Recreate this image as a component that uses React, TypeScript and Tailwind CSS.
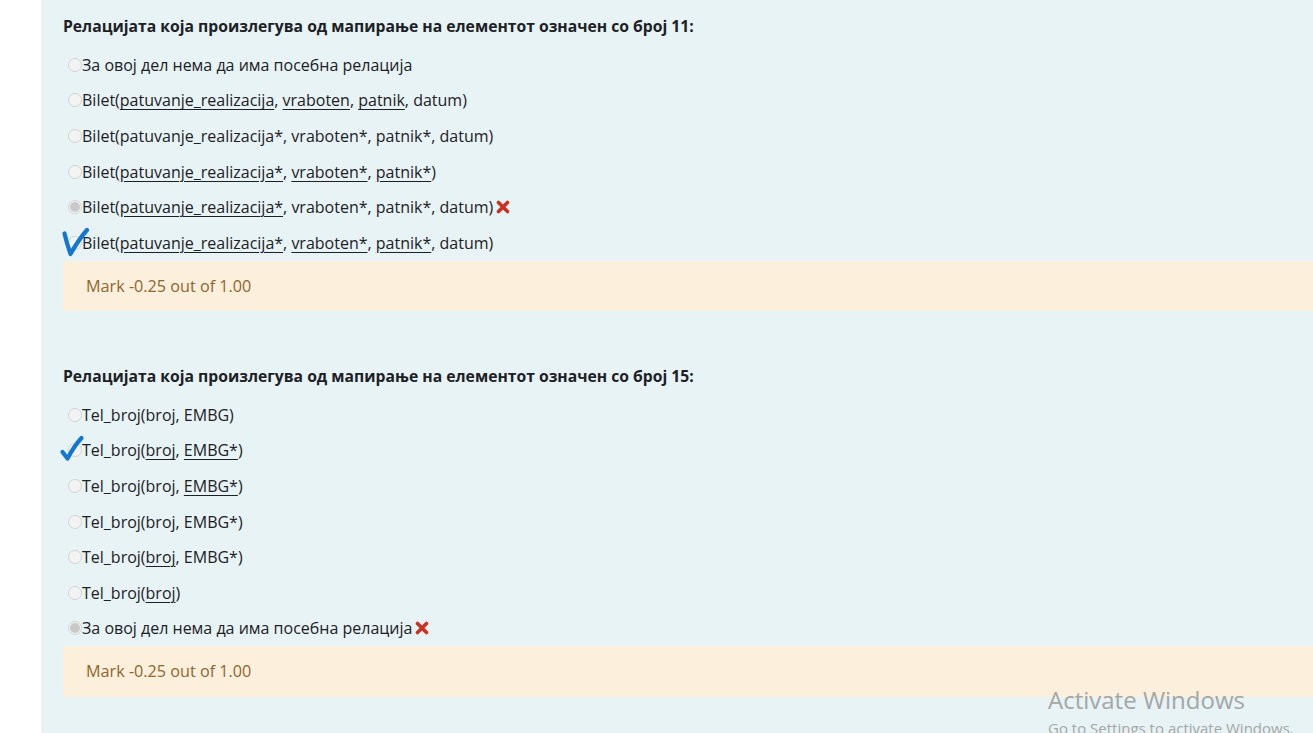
import React from "react";

type Part = { t: string; u?: boolean };

const U = (t: string): Part => ({ t, u: true });
const T = (t: string): Part => ({ t });

type Opt = { parts: Part[]; checked?: boolean; wrong?: boolean; mark?: "v" | "check" };

function Radio({ checked }: { checked?: boolean }) {
  return (
    <span className="inline-flex items-center justify-center w-[14px] h-[14px] rounded-full border border-[#d3d3d3] bg-[#f3f3f3] ml-[5px] shrink-0">
      {checked && <span className="w-[10px] h-[10px] rounded-full bg-[#c9c9c9]" />}
    </span>
  );
}

function WrongX() {
  return (
    <svg width="14" height="14" viewBox="0 0 14 14" className="ml-[3px]">
      <path d="M2.5 2.5 L11.5 11.5 M11.5 2.5 L2.5 11.5" stroke="#ca3120" strokeWidth="3.6" strokeLinecap="round" />
    </svg>
  );
}

function BigV() {
  return (
    <svg width="32" height="34" viewBox="0 0 32 34" className="absolute left-[-2px] top-[0px]">
      <path d="M3.5 8.5 C5 15 7 22 9.5 29 C14 21 19 13 26 5" stroke="#1376d0" strokeWidth="4.2" fill="none" strokeLinecap="round" strokeLinejoin="round" />
    </svg>
  );
}

function Check() {
  return (
    <svg width="28" height="32" viewBox="0 0 28 32" className="absolute left-[-4px] top-[0px]">
      <path d="M3.5 19 L8.5 25.5 C12 19 16 12 22.5 5" stroke="#1376d0" strokeWidth="4.2" fill="none" strokeLinecap="round" strokeLinejoin="round" />
    </svg>
  );
}

function Option({ o }: { o: Opt }) {
  return (
    <div className="h-[35.6px] flex items-center relative">
      <Radio checked={o.checked} />
      {o.mark === "v" && <BigV />}
      {o.mark === "check" && <Check />}
      <span className="text-[16px] text-[#1d2125] whitespace-pre">
        {o.parts.map((p, i) =>
          p.u ? (
            <span key={i} className="underline underline-offset-[3px] decoration-[1px]">
              {p.t}
            </span>
          ) : (
            <span key={i}>{p.t}</span>
          )
        )}
      </span>
      {o.wrong && <WrongX />}
    </div>
  );
}

function Question({ title, opts }: { title: string; opts: Opt[] }) {
  return (
    <div>
      <div className="h-[22px] flex items-center text-[15.7px] font-bold text-[#1d2125]">{title}</div>
      <div className="mt-[9px]">
        {opts.map((o, i) => (
          <Option key={i} o={o} />
        ))}
      </div>
      <div className="h-[50.5px] bg-[#fcefdc] rounded-l-[4px] flex items-center pl-[23px] text-[16.2px] text-[#8e662e]">
        Mark -0.25 out of 1.00
      </div>
    </div>
  );
}

const q1: Opt[] = [
  { parts: [T("За овој дел нема да има посебна релација")] },
  { parts: [T("Bilet("), U("patuvanje_realizacija"), T(", "), U("vraboten"), T(", "), U("patnik"), T(", datum)")] },
  { parts: [T("Bilet(patuvanje_realizacija*, vraboten*, patnik*, datum)")] },
  { parts: [T("Bilet("), U("patuvanje_realizacija*"), T(", "), U("vraboten*"), T(", "), U("patnik*"), T(")")] },
  { parts: [T("Bilet("), U("patuvanje_realizacija*"), T(", vraboten*, patnik*, datum)")], checked: true, wrong: true },
  { parts: [T("Bilet("), U("patuvanje_realizacija*"), T(", "), U("vraboten*"), T(", "), U("patnik*"), T(", datum)")], mark: "v" },
];

const q2: Opt[] = [
  { parts: [T("Tel_broj(broj, EMBG)")] },
  { parts: [T("Tel_broj("), U("broj"), T(", "), U("EMBG*"), T(")")], mark: "check" },
  { parts: [T("Tel_broj(broj, "), U("EMBG*"), T(")")] },
  { parts: [T("Tel_broj(broj, EMBG*)")] },
  { parts: [T("Tel_broj("), U("broj"), T(", EMBG*)")] },
  { parts: [T("Tel_broj("), U("broj"), T(")")] },
  { parts: [T("За овој дел нема да има посебна релација")], checked: true, wrong: true },
];

export default function App() {
  return (
    <div
      className="w-[1313px] h-[733px] overflow-hidden flex bg-white relative"
      style={{ fontFamily: '"Open Sans", "Noto Sans", sans-serif' }}
    >
      <div className="w-[41px] shrink-0 bg-white" />
      <div className="flex-1 bg-[#e7f3f5] pl-[22px] pt-[16px]">
        <Question title="Релацијата која произлегува од мапирање на елементот означен со број 11:" opts={q1} />
        <div className="h-[55px]" />
        <Question title="Релацијата која произлегува од мапирање на елементот означен со број 15:" opts={q2} />
      </div>
      <div className="absolute left-[1048px] top-[688px] text-[#a6a6a6] leading-none whitespace-nowrap">
        <div className="text-[24px]">Activate Windows</div>
        <div className="text-[15px] mt-[9px]">Go to Settings to activate Windows.</div>
      </div>
    </div>
  );
}
